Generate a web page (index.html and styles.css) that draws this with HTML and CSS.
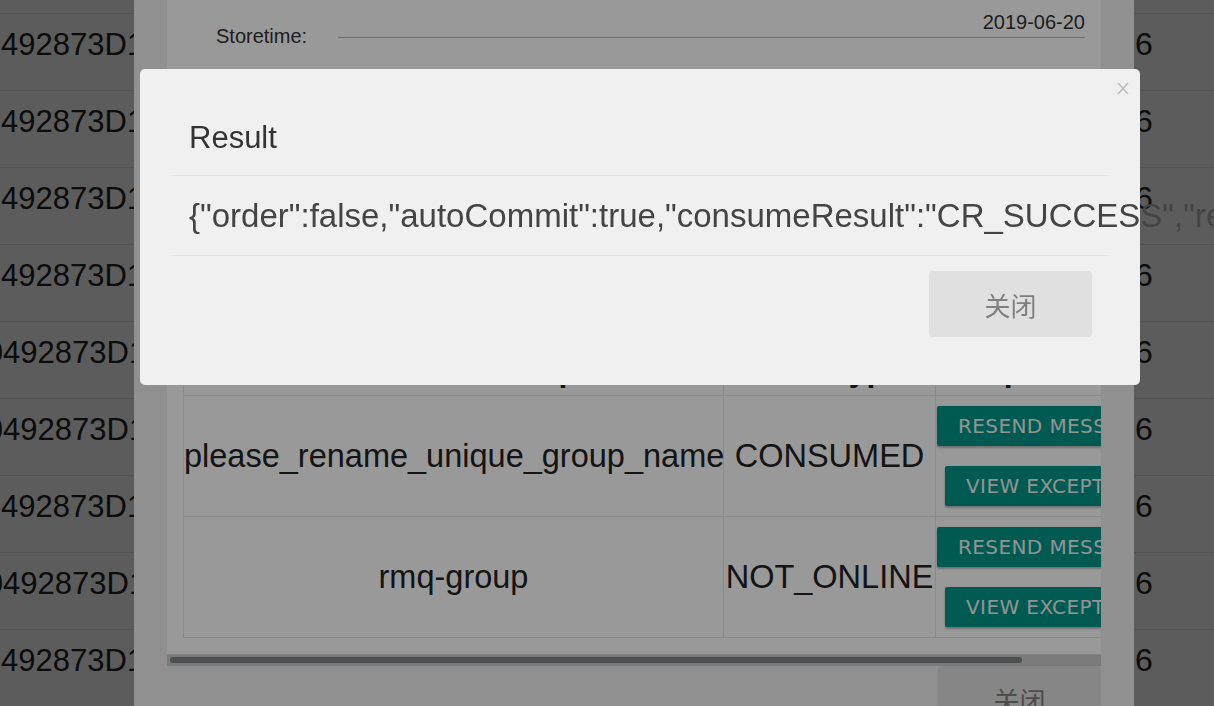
FILE: index.html
```html
<!DOCTYPE html>
<html lang="en">
<head>
<meta charset="utf-8">
<title>Message Track</title>
<link rel="stylesheet" href="styles.css">
</head>
<body>
<div class="page">
  <div class="msg-list">
    <div class="msg-row"><div class="msg-id">1492873D1F6A</div><div class="msg-mid"></div><div class="msg-num">6</div></div>
    <div class="msg-row"><div class="msg-id">1492873D1F6A</div><div class="msg-mid"></div><div class="msg-num">6</div></div>
    <div class="msg-row"><div class="msg-id">1492873D1F6A</div><div class="msg-mid"></div><div class="msg-num">6</div></div>
    <div class="msg-row"><div class="msg-id">1492873D1F6A</div><div class="msg-mid"></div><div class="msg-num">6</div></div>
    <div class="msg-row"><div class="msg-id">1492873D1F6A</div><div class="msg-mid"></div><div class="msg-num">6</div></div>
    <div class="msg-row"><div class="msg-id shift">0492873D1F6A</div><div class="msg-mid"></div><div class="msg-num">6</div></div>
    <div class="msg-row"><div class="msg-id shift">0492873D1F6A</div><div class="msg-mid"></div><div class="msg-num">6</div></div>
    <div class="msg-row"><div class="msg-id">1492873D1F6A</div><div class="msg-mid"></div><div class="msg-num">6</div></div>
    <div class="msg-row"><div class="msg-id shift">0492873D1F6A</div><div class="msg-mid"></div><div class="msg-num">6</div></div>
    <div class="msg-row"><div class="msg-id">1492873D1F6A</div><div class="msg-mid"></div><div class="msg-num">6</div></div>
  </div>
</div>

<div class="backdrop"></div>

<div class="detail-dialog">
  <div class="detail-panel">
    <div class="form-row">
      <label class="form-label">Storetime:</label>
      <div class="form-value">2019-06-20</div>
    </div>
    <div class="track-scroll">
      <table class="track-table">
        <colgroup>
          <col class="col-group">
          <col class="col-type">
          <col class="col-ops">
        </colgroup>
        <thead>
          <tr><th>consumerGroup</th><th>trackType</th><th>Operation</th></tr>
        </thead>
        <tbody>
          <tr>
            <td>please_rename_unique_group_name</td>
            <td>CONSUMED</td>
            <td class="ops"><button class="btn-raised">Resend Message</button><button class="btn-raised btn-second">View Exception</button></td>
          </tr>
          <tr>
            <td>rmq-group</td>
            <td>NOT_ONLINE</td>
            <td class="ops"><button class="btn-raised">Resend Message</button><button class="btn-raised btn-second">View Exception</button></td>
          </tr>
        </tbody>
      </table>
    </div>
    <div class="hscroll"><div class="hscroll-thumb"></div></div>
  </div>
  <div class="detail-footer"><button class="btn-flat">关闭</button></div>
</div>

<div class="backdrop"></div>

<div class="result-modal">
  <button class="modal-close" aria-label="close">
    <svg width="12" height="13" viewBox="0 0 12 13"><path d="M1 1 L11 12 M11 1 L1 12" stroke="#bcbcbc" stroke-width="1.5" fill="none"/></svg>
  </button>
  <div class="modal-header"><h4 class="modal-title">Result</h4></div>
  <div class="modal-body">{"order":false,"autoCommit":true,"consumeResult":"CR_SUCCESS","remark":"consume success","spentTimeMills":6}</div>
  <div class="modal-footer"><button class="btn-flat">关闭</button></div>
</div>
</body>
</html>
```
FILE: styles.css
```css
html, body {
  margin: 0;
  padding: 0;
  width: 1214px;
  height: 706px;
  overflow: hidden;
  background: #ffffff;
  font-family: "Liberation Sans", Arial, sans-serif;
}

/* base page */
.page {
  color: #222222;
  font-size: 31px;
}
.msg-list {
  margin-top: -63px;
}
.msg-row {
  display: flex;
  height: 77px;
  box-sizing: border-box;
  padding-top: 12px;
  border-bottom: 1px solid #e8e8e8;
  line-height: 37px;
}
.msg-id {
  width: 134px;
  overflow: hidden;
  white-space: nowrap;
  text-indent: -16.2px;
}
.msg-id.shift {
  text-indent: -14.2px;
}
.msg-mid {
  flex: 1;
}
.msg-num {
  width: 79px;
  padding-left: 1px;
  font-size: 32px;
}

.backdrop {
  position: fixed;
  inset: 0;
  background: rgba(0, 0, 0, 0.4);
}

/* detail dialog */
.detail-dialog {
  position: absolute;
  left: 134px;
  top: 0;
  width: 1000px;
  height: 760px;
  box-sizing: border-box;
  padding: 0 33px;
  background: #f0f0f0;
}
.detail-panel {
  background: #ffffff;
}
.form-row {
  display: flex;
  align-items: flex-start;
  padding: 11px 16px 0 49px;
  font-size: 20px;
  line-height: 23px;
  color: #333333;
}
.form-label {
  width: 122px;
  margin-top: 14px;
}
.form-value {
  flex: 1;
  text-align: right;
  padding-bottom: 3px;
  border-bottom: 1px solid #b7b7b7;
}
.track-scroll {
  margin-top: 293px;
  padding: 16px;
  overflow: hidden;
}
.track-table {
  border-collapse: collapse;
  table-layout: fixed;
  width: 990px;
  color: #222222;
}
.col-group { width: 540px; }
.col-type { width: 212px; }
.col-ops { width: 238px; }
.track-table th,
.track-table td {
  border: 1px solid #e6e6e6;
  padding: 0;
  text-align: center;
  white-space: nowrap;
}
.track-table th {
  font-size: 32px;
  font-weight: bold;
  line-height: 24px;
  padding-bottom: 13px;
}
.track-table td {
  font-size: 32.5px;
  vertical-align: middle;
}
.track-table td.ops {
  text-align: left;
  vertical-align: top;
  padding: 10px 0;
}
.btn-raised {
  display: block;
  height: 40px;
  margin: 0 0 0 1px;
  padding: 0 21px;
  border: none;
  border-radius: 2px;
  background: #009688;
  color: #eef6f5;
  font-family: "DejaVu Sans", sans-serif;
  font-size: 20px;
  letter-spacing: 0.4px;
  text-transform: uppercase;
  white-space: nowrap;
  box-shadow: 0 2px 2px rgba(0, 0, 0, 0.24), 0 0 2px rgba(0, 0, 0, 0.12);
}
.btn-second {
  margin-top: 20px;
  margin-left: 9px;
}
.hscroll {
  height: 12px;
  box-sizing: border-box;
  padding: 3px 0 0 3px;
  background: #cbcbcb;
  box-shadow: inset 0 1px 0 #dadada;
}
.hscroll-thumb {
  width: 852px;
  height: 6px;
  border-radius: 3px;
  background: #7c8486;
}
.detail-footer {
  display: flex;
  justify-content: flex-end;
}

.btn-flat {
  width: 163px;
  height: 66px;
  border: none;
  border-radius: 4px;
  background: #e0e0e0;
  color: #7f7f7f;
  font-family: "Noto Sans CJK SC", sans-serif;
  font-size: 26px;
  padding: 0;
}

/* result modal */
.result-modal {
  position: absolute;
  left: 140px;
  top: 69px;
  width: 1000px;
  height: 316px;
  box-sizing: border-box;
  padding: 0 32px;
  background: #f0f0f0;
  border-radius: 5px;
}
.modal-close {
  position: absolute;
  top: 13px;
  right: 11px;
  width: 12px;
  height: 13px;
  padding: 0;
  border: none;
  background: none;
  display: flex;
}
.modal-header {
  padding: 52px 17px 20px;
  border-bottom: 1px solid #e3e3e3;
}
.modal-title {
  margin: 0;
  font-size: 31px;
  font-weight: normal;
  line-height: 34px;
  color: #333333;
}
.modal-body {
  padding: 21px 17px;
  font-size: 33px;
  line-height: 37px;
  color: #444444;
  white-space: nowrap;
  border-bottom: 1px solid #e3e3e3;
}
.modal-footer {
  display: flex;
  justify-content: flex-end;
  padding: 15px 16px 0;
}
```
